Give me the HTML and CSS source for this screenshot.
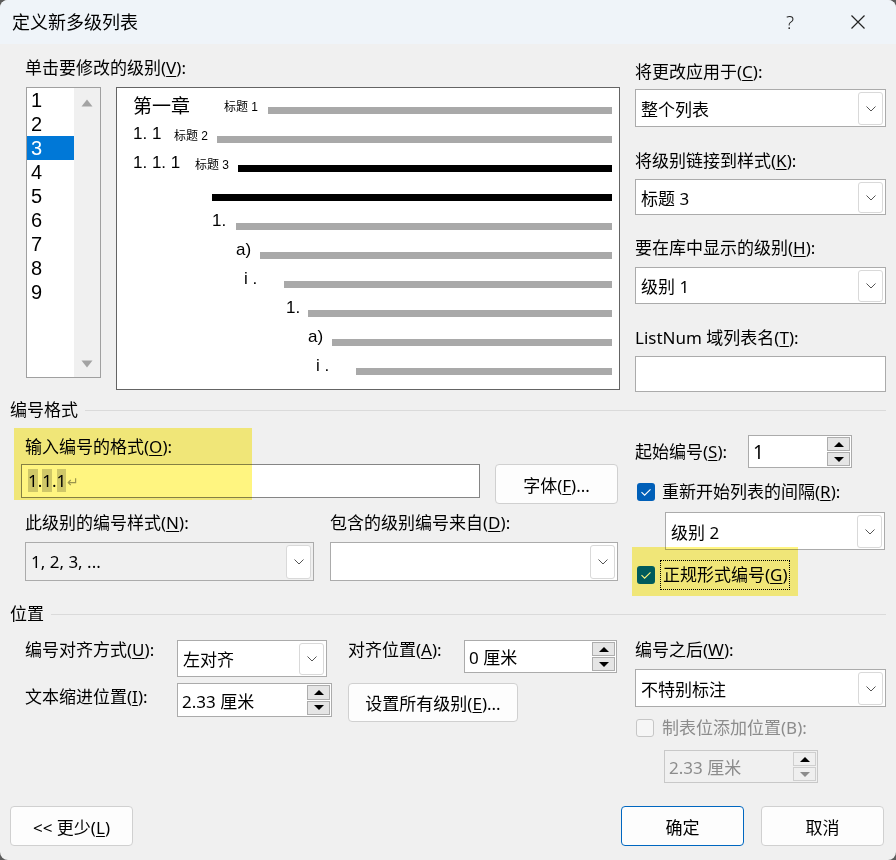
FILE: index.html
```html
<!DOCTYPE html>
<html>
	<head>
		<title>定义新多级列表</title>
		<meta charset="utf-8">
		<link rel="stylesheet" href="styles.css">
	</head>
	<body>
	<div class="dialog">
		<div class="titlebar">
			<span class="title">定义新多级列表</span>
			<span class="tb-btn tb-help">?</span>
			<span class="tb-btn tb-close"><svg width="16" height="16" viewBox="0 0 16 16"><path d="M1.5 1.5 14.5 14.5M14.5 1.5 1.5 14.5" stroke="#222" stroke-width="1.2" fill="none"/></svg></span>
		</div>

		<div class="top">
			<div class="levels-col">
				<div class="lbl">单击要修改的级别(<u>V</u>):</div>
				<div class="levels-row">
					<div class="levelbox">
						<ul class="level-list">
							<li>1</li><li>2</li><li class="sel">3</li><li>4</li><li>5</li><li>6</li><li>7</li><li>8</li><li>9</li>
						</ul>
						<div class="vscroll">
							<svg width="12" height="8" viewBox="0 0 12 8"><path d="M6 0.5 11.5 7.5H0.5Z" fill="#a3a3a3"/></svg>
							<svg width="12" height="8" viewBox="0 0 12 8"><path d="M6 7.5 11.5 0.5H0.5Z" fill="#a3a3a3"/></svg>
						</div>
					</div>
					<div class="preview">
						<div class="pv-row i0"><span class="pv-num big" style="width:91px">第一章</span><span class="pv-style" style="width:44px">标题 1</span><span class="bar"></span></div>
						<div class="pv-row i0"><span class="pv-num" style="width:41px">1. 1</span><span class="pv-style" style="width:43px">标题 2</span><span class="bar"></span></div>
						<div class="pv-row i0"><span class="pv-num" style="width:62px">1. 1. 1</span><span class="pv-style" style="width:43px">标题 3</span><span class="bar dark"></span></div>
						<div class="pv-row" style="padding-left:95px"><span class="bar dark"></span></div>
						<div class="pv-row" style="padding-left:95px"><span class="pv-num" style="width:24px">1.</span><span class="bar"></span></div>
						<div class="pv-row" style="padding-left:119px"><span class="pv-num" style="width:24px">a)</span><span class="bar"></span></div>
						<div class="pv-row" style="padding-left:127px"><span class="pv-num" style="width:40px">i .</span><span class="bar"></span></div>
						<div class="pv-row" style="padding-left:169px"><span class="pv-num" style="width:22px">1.</span><span class="bar"></span></div>
						<div class="pv-row" style="padding-left:191px"><span class="pv-num" style="width:24px">a)</span><span class="bar"></span></div>
						<div class="pv-row" style="padding-left:199px"><span class="pv-num" style="width:40px">i .</span><span class="bar"></span></div>
					</div>
				</div>
			</div>

			<div class="side">
				<div class="lbl">将更改应用于(<u>C</u>):</div>
				<div class="combo s1"><span class="combo-text">整个列表</span><span class="combo-btn"><svg width="10" height="6" viewBox="0 0 10 6"><path d="M0.5 0.5 5 5 9.5 0.5" fill="none" stroke="#555"/></svg></span></div>
				<div class="lbl gap24">将级别链接到样式(<u>K</u>):</div>
				<div class="combo s2"><span class="combo-text">标题 3</span><span class="combo-btn"><svg width="10" height="6" viewBox="0 0 10 6"><path d="M0.5 0.5 5 5 9.5 0.5" fill="none" stroke="#555"/></svg></span></div>
				<div class="lbl gap23">要在库中显示的级别(<u>H</u>):</div>
				<div class="combo s3"><span class="combo-text">级别 1</span><span class="combo-btn"><svg width="10" height="6" viewBox="0 0 10 6"><path d="M0.5 0.5 5 5 9.5 0.5" fill="none" stroke="#555"/></svg></span></div>
				<div class="lbl gap24">ListNum 域列表名(<u>T</u>):</div>
				<div class="textbox s4"></div>
			</div>
		</div>

		<div class="section"><span>编号格式</span></div>
		<div class="format">
			<div class="fmt-left">
				<div class="lbl fmt-first">输入编号的格式(<u>O</u>):</div>
				<div class="fmt-row">
					<div class="fmt-input"><span class="fld">1</span>.<span class="fld">1</span>.<span class="fld">1</span><span class="para">↵</span></div>
					<button type="button" class="btn font-btn">字体(<u>F</u>)...</button>
				</div>
				<div class="two-col lbl-row">
					<div class="lbl">此级别的编号样式(<u>N</u>):</div>
					<div class="lbl">包含的级别编号来自(<u>D</u>):</div>
				</div>
				<div class="two-col combo-row">
					<div class="combo gray"><span class="combo-text">1, 2, 3, ...</span><span class="combo-btn"><svg width="10" height="6" viewBox="0 0 10 6"><path d="M0.5 0.5 5 5 9.5 0.5" fill="none" stroke="#555"/></svg></span></div>
					<div class="combo"><span class="combo-text"></span><span class="combo-btn"><svg width="10" height="6" viewBox="0 0 10 6"><path d="M0.5 0.5 5 5 9.5 0.5" fill="none" stroke="#555"/></svg></span></div>
				</div>
			</div>
			<div class="fmt-right">
				<div class="start-row">
					<span class="lbl">起始编号(<u>S</u>):</span>
					<div class="spin start-spin"><span class="spin-val">1</span><div class="spin-btns"><span class="sb"><i class="tri up"></i></span><span class="sb"><i class="tri down"></i></span></div></div>
				</div>
				<div class="check-row restart">
					<svg class="cb" width="18" height="18" viewBox="0 0 18 18"><rect width="18" height="18" rx="3" fill="#005fb8"/><path d="M4.5 9.2 7.6 12.2 13.5 6.3" fill="none" stroke="#fff" stroke-width="1.1"/></svg>
					<span class="lbl">重新开始列表的间隔(<u>R</u>):</span>
				</div>
				<div class="combo s5"><span class="combo-text">级别 2</span><span class="combo-btn"><svg width="10" height="6" viewBox="0 0 10 6"><path d="M0.5 0.5 5 5 9.5 0.5" fill="none" stroke="#555"/></svg></span></div>
				<div class="check-row legal">
					<svg class="cb" width="18" height="18" viewBox="0 0 18 18"><rect width="18" height="18" rx="3" fill="#005fb8"/><path d="M4.5 9.2 7.6 12.2 13.5 6.3" fill="none" stroke="#fff" stroke-width="1.1"/></svg>
					<span class="lbl focus">正规形式编号(<u>G</u>)</span>
				</div>
			</div>
		</div>

		<div class="section pos"><span>位置</span></div>
		<div class="position">
			<div class="pos-left">
				<div class="pos-row">
					<span class="lbl pl-1">编号对齐方式(<u>U</u>):</span>
					<div class="combo align-combo"><span class="combo-text">左对齐</span><span class="combo-btn"><svg width="10" height="6" viewBox="0 0 10 6"><path d="M0.5 0.5 5 5 9.5 0.5" fill="none" stroke="#555"/></svg></span></div>
					<span class="lbl pl-2">对齐位置(<u>A</u>):</span>
					<div class="spin at-spin"><span class="spin-val">0 厘米</span><div class="spin-btns"><span class="sb"><i class="tri up"></i></span><span class="sb"><i class="tri down"></i></span></div></div>
				</div>
				<div class="pos-row row2">
					<span class="lbl pl-1">文本缩进位置(<u>I</u>):</span>
					<div class="spin indent-spin"><span class="spin-val">2.33 厘米</span><div class="spin-btns"><span class="sb"><i class="tri up"></i></span><span class="sb"><i class="tri down"></i></span></div></div>
					<button type="button" class="btn all-btn">设置所有级别(<u>E</u>)...</button>
				</div>
			</div>
			<div class="pos-right">
				<div class="lbl">编号之后(<u>W</u>):</div>
				<div class="combo s6"><span class="combo-text">不特别标注</span><span class="combo-btn"><svg width="10" height="6" viewBox="0 0 10 6"><path d="M0.5 0.5 5 5 9.5 0.5" fill="none" stroke="#555"/></svg></span></div>
				<div class="check-row tabstop">
					<span class="cb-off"></span>
					<span class="lbl off">制表位添加位置(B):</span>
				</div>
				<div class="spin tab-spin disabled"><span class="spin-val">2.33 厘米</span><div class="spin-btns"><span class="sb"><i class="tri up"></i></span><span class="sb"><i class="tri down"></i></span></div></div>
			</div>
		</div>

		<div class="footer">
			<button type="button" class="btn foot-btn">&lt;&lt; 更少(<u>L</u>)</button>
			<span class="spacer"></span>
			<button type="button" class="btn foot-btn ok">确定</button>
			<button type="button" class="btn foot-btn">取消</button>
		</div>

		<div class="hl hl-format"></div>
		<div class="hl hl-legal"></div>
	</div>
	</body>
</html>
```

FILE: styles.css
```css
html,body{margin:0;padding:0;background:#5c5c5c;}
body{font-family:"Noto Sans","Noto Sans CJK SC",sans-serif;font-size:17px;color:#000;}
u{text-decoration-thickness:1px;text-underline-offset:2px;}

.dialog{position:relative;width:896px;height:860px;background:#f0f0f0;border-radius:8px;overflow:hidden;display:flex;flex-direction:column;}

/* title bar */
.titlebar{height:44px;flex:none;background:#eff4f9;display:flex;align-items:center;padding:0 15px 0 12px;}
.title{flex:1;font-size:18px;line-height:22px;}
.tb-btn{width:46px;height:44px;display:flex;align-items:center;justify-content:center;}
.tb-help{margin-right:22px;font-size:19px;font-weight:300;color:#222;}

.lbl{line-height:20px;height:20px;white-space:nowrap;}

/* top part */
.top{display:flex;padding:14px 0 0 25px;height:348px;flex:none;box-sizing:border-box;}
.levels-col{width:595px;}
.levels-row{display:flex;margin-top:9px;}
.levelbox{width:75px;height:291px;margin-left:1px;box-sizing:border-box;border:1px solid #a0a0a0;background:#fff;display:flex;}
.level-list{list-style:none;margin:0;padding:0;width:47px;font-family:"Liberation Sans",sans-serif;font-size:20px;}
.level-list li{height:24px;line-height:24px;padding-left:4px;}
.level-list li.sel{background:#0078d7;color:#fff;}
.vscroll{flex:1;background:#f0f0f0;display:flex;flex-direction:column;justify-content:space-between;align-items:center;padding:11px 0 9px;}

.preview{width:504px;height:303px;margin-left:15px;box-sizing:border-box;border:1px solid #646464;background:#fff;padding:7px 7px 0 0;}
.pv-row{height:29px;display:flex;align-items:center;font-family:"Liberation Sans","Noto Sans CJK SC",sans-serif;font-size:17px;line-height:20px;}
.pv-row.i0{padding-left:16px;}
.pv-num{flex:none;white-space:nowrap;margin-bottom:10px;}
.pv-num.big{font-size:19px;font-family:"Noto Sans CJK SC",sans-serif;}
.pv-style{flex:none;white-space:nowrap;font-size:12px;line-height:14px;margin-bottom:6px;}
.bar{flex:1;height:7px;background:#a9a9a9;margin-top:1px;}
.bar.dark{background:#000;}

.side{width:251px;margin-left:15px;padding-top:4px;}
.gap24{margin-top:24px;}
.gap23{margin-top:23px;}

/* combo box */
.combo{display:flex;box-sizing:border-box;border:1px solid #ababab;background:#fff;}
.combo.gray{background:#f0f0f0;}
.combo-text{flex:1;padding-left:5px;align-self:center;white-space:nowrap;}
.combo-btn{width:25px;margin:2px 2px 1px 0;box-sizing:border-box;border:1px solid #d9d9d9;border-radius:3px;background:#fff;display:flex;align-items:center;justify-content:center;}
.s1{margin-top:7px;height:38px;}
.s2{margin-top:8px;height:36px;}
.s3{margin-top:9px;height:37px;}
.textbox{box-sizing:border-box;border:1px solid #ababab;background:#fff;}
.s4{margin-top:8px;height:36px;}

/* section headers */
.section{display:flex;align-items:center;padding:0 10px;height:20px;line-height:20px;margin-top:8px;flex:none;}
.section::after{content:"";flex:1;height:1px;background:#dadada;margin-left:7px;}
.section.pos{margin-top:0;}

/* number format */
.format{display:flex;padding-left:25px;height:184px;flex:none;}
.fmt-left{width:593px;}
.fmt-first{margin-top:17px;}
.fmt-row{display:flex;margin-top:7px;align-items:flex-start;}
.fmt-input{width:459px;height:34px;margin-left:-4px;box-sizing:border-box;border:1px solid #858585;background:#fff;padding-left:6px;line-height:32px;font-size:17px;}
.fld{background:#cfcfcf;}
.para{color:#9a9a9a;font-size:14px;margin-left:1px;}
.btn{font-family:inherit;font-size:17px;color:#000;background:#fdfdfd;border:1px solid #d0d0d0;border-radius:4px;padding:0;box-sizing:border-box;}
.font-btn{width:123px;height:40px;margin-left:15px;}
.two-col{display:grid;grid-template-columns:289px 288px;column-gap:16px;}
.lbl-row{margin-top:9px;}
.combo-row{margin-top:9px;}
.combo-row .combo{height:39px;}

.fmt-right{width:251px;margin-left:17px;}
.start-row{display:flex;align-items:center;margin-top:15px;}
.start-row .lbl{width:113px;}

.spin{display:flex;box-sizing:border-box;border:1px solid #ababab;background:#fff;}
.spin-val{flex:1;padding-left:4px;align-self:center;white-space:nowrap;}
.spin-btns{width:23px;margin:1px 1px 1px 0;display:flex;flex-direction:column;gap:1px;}
.sb{flex:1;box-sizing:border-box;border:1px solid #adadad;background:#e5e5e5;display:flex;align-items:center;justify-content:center;}
.tri{width:0;height:0;border-left:5px solid transparent;border-right:5px solid transparent;}
.tri.up{border-bottom:5px solid #000;}
.tri.down{border-top:5px solid #000;}
.start-spin{width:104px;height:33px;}
.start-spin .spin-val{font-size:19px;}

.check-row{display:flex;align-items:center;}
.cb{margin-left:2px;margin-right:7px;flex:none;}
.restart{margin-top:14px;height:20px;}
.s5{margin-left:30px;width:220px;height:38px;margin-top:10px;}
.legal{margin-top:10px;height:30px;}
.legal .cb{margin-right:5px;}
.focus{height:auto;border:1px dotted #000;padding:4px 1px 4px 2px;}

/* position */
.position{display:flex;padding-left:25px;flex:1;}
.pos-left{width:593px;padding-top:16px;}
.pos-row{display:flex;align-items:flex-start;}
.pos-row.row2{margin-top:6px;}
.pl-1{width:152px;}
.pl-2{width:116px;margin-left:21px;}
.row2 .pl-1{margin-top:4px;}
.align-combo{width:150px;height:37px;}
.at-spin{width:153px;height:33px;}
.indent-spin{width:155px;height:34px;}
.all-btn{width:170px;height:39px;margin-left:16px;}

.pos-right{width:251px;margin-left:17px;padding-top:16px;}
.s6{margin-top:9px;height:38px;}
.tabstop{margin-top:11px;height:20px;}
.cb-off{width:18px;height:18px;box-sizing:border-box;border:1px solid #c6c6c6;border-radius:3px;background:#f6f6f6;margin-left:1px;margin-right:8px;}
.off{color:#8c8c8c;}
.tab-spin{width:154px;height:33px;margin-left:29px;margin-top:12px;}
.spin.disabled{background:#f0f0f0;border-color:#c8c8c8;color:#8c8c8c;}
.disabled .sb{background:#efefef;border-color:#cfcfcf;}
.disabled .tri.down{border-top-color:#8c8c8c;}

/* footer */
.footer{display:flex;padding:0 12px 14px 10px;flex:none;}
.spacer{flex:1;}
.foot-btn{width:123px;height:40px;}
.foot-btn.ok{border-color:#0067c0;margin-right:17px;}

/* yellow marker */
.hl{position:absolute;background:#fff580;mix-blend-mode:multiply;}
.hl-format{left:14px;top:428px;width:238px;height:72px;}
.hl-legal{left:632px;top:547px;width:166px;height:49px;}
```
